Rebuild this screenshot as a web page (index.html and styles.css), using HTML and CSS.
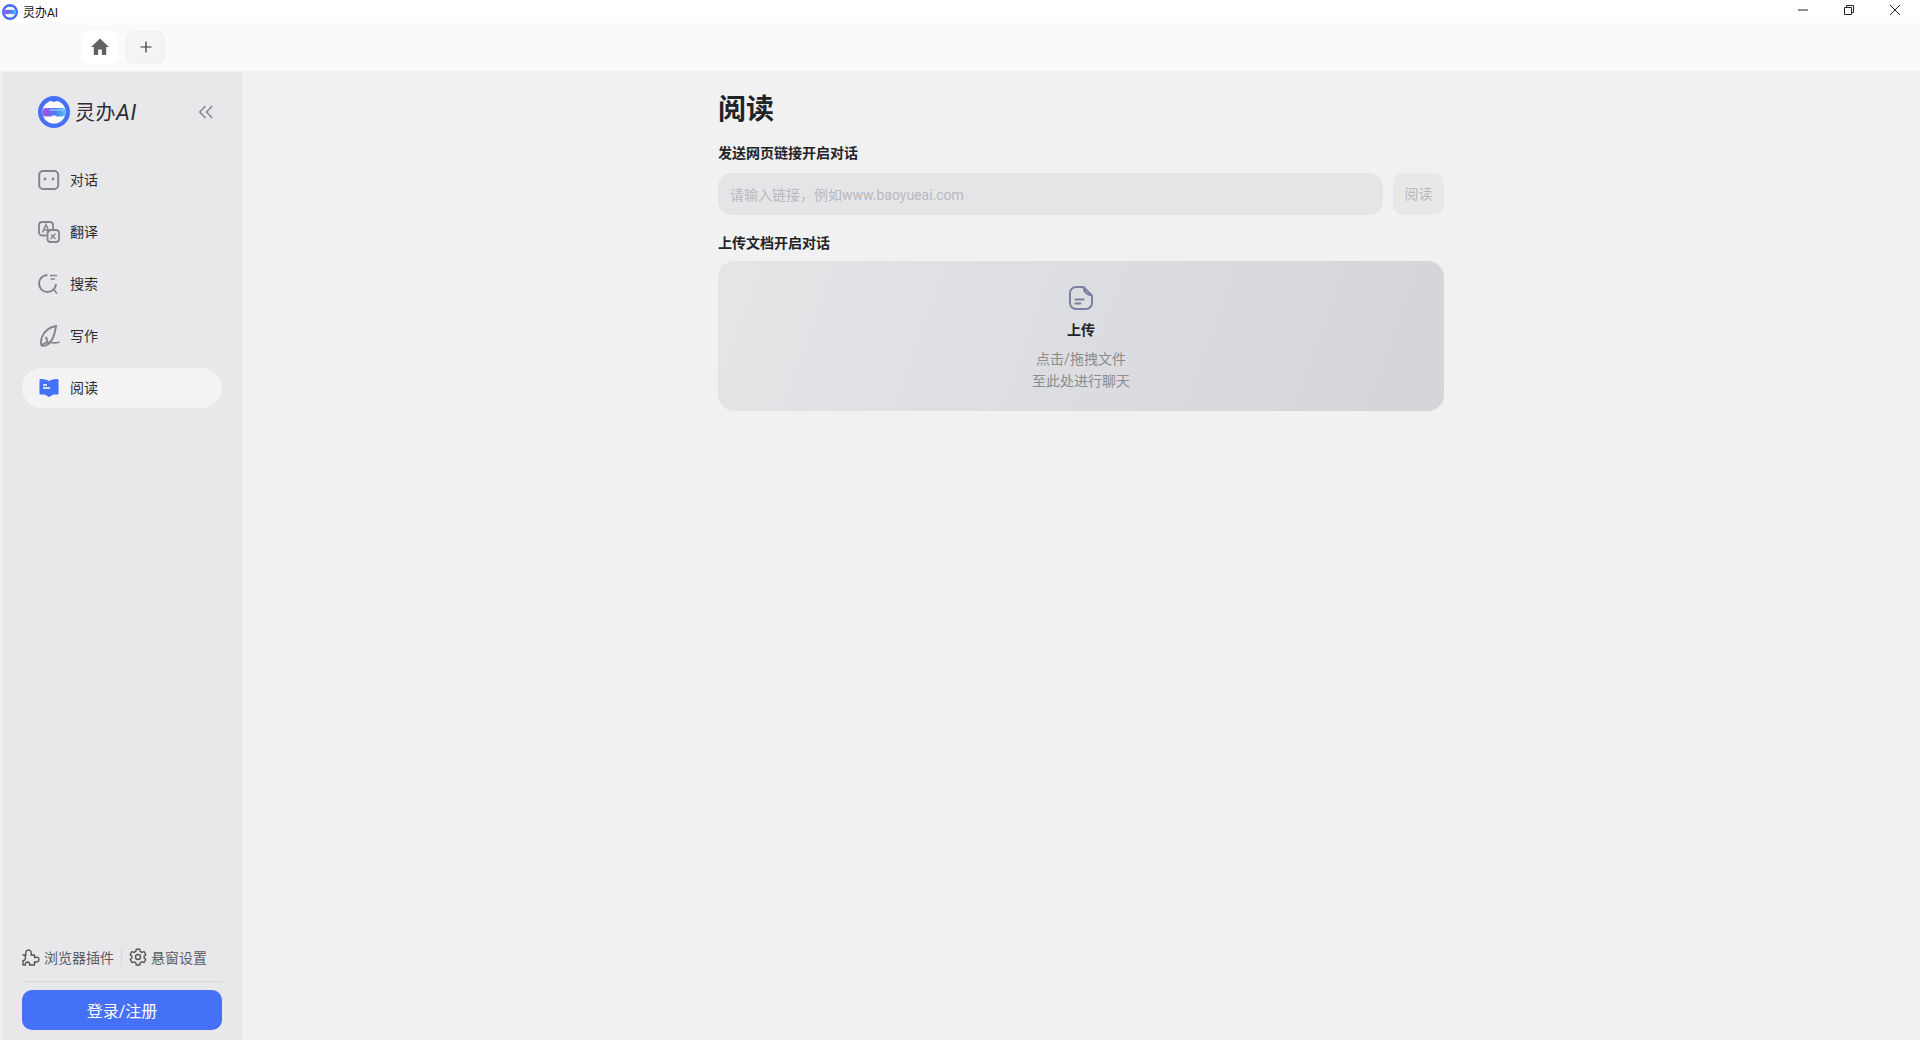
FILE: index.html
```html
<!DOCTYPE html>
<html lang="zh-CN">
<head>
  <title>灵办AI</title>
  <meta charset="utf-8">
  <meta name="viewport" content="width=device-width, initial-scale=1">
  <link rel="stylesheet" href="styles.css">
</head>
<body>
  <div class="titlebar">
    <div class="titlebar-name">
      <svg class="logo-small" viewBox="0 0 32 32">
        <circle cx="16" cy="16" r="13.500" fill="#fff" stroke="#4570f8" stroke-width="5"/>
        <path d="M11 3q5 5 10 0z" fill="#4570f8"/>
        <path d="M8 11.500h16a3.500 3.500 0 0 1 3.500 3.500v2a3.500 3.500 0 0 1-3.500 3.500h-5l-3-1.500-3 1.500H8A3.500 3.500 0 0 1 4.500 17v-2A3.500 3.500 0 0 1 8 11.500z" fill="url(#visor-a)"/>
        <defs>
          <linearGradient id="visor-a" x1="0" x2="1" y1="0" y2="0">
            <stop offset="0" stop-color="#a64fe8"/>
            <stop offset=".55" stop-color="#4b7cf5"/>
            <stop offset="1" stop-color="#4fc3f2"/>
          </linearGradient>
        </defs>
      </svg>
      <span>灵办AI</span>
    </div>
    <div class="window-buttons">
      <svg class="window-icon" viewBox="0 0 12 12"><path d="M1 6h10" stroke="#222" fill="none"/></svg>
      <svg class="window-icon" viewBox="0 0 12 12"><path d="M1.500 3.500h7v7h-7zM3.500 3.500v-2h7v7h-2" stroke="#222" fill="none"/></svg>
      <svg class="window-icon" viewBox="0 0 12 12"><path d="M1 1l10 10M11 1L1 11" stroke="#222" fill="none"/></svg>
    </div>
  </div>

  <div class="tabbar">
    <div class="tab tab-home">
      <svg class="tab-icon" viewBox="0 0 20 20"><path d="M10 1.500L1 10h2.800v8h4.400v-5.500h3.600V18h4.400v-8H19z" fill="#636363"/></svg>
    </div>
    <div class="tab tab-add">
      <svg class="tab-icon-add" viewBox="0 0 12 12"><path d="M6 .5v11M.5 6h11" stroke="#333" stroke-width="1.200" fill="none"/></svg>
    </div>
  </div>

  <div class="layout">
    <aside class="sidebar">
      <div class="brand">
        <svg class="logo" viewBox="0 0 32 32">
          <circle cx="16" cy="16" r="13.800" fill="#fff" stroke="#4570f8" stroke-width="4.400"/>
          <path d="M10.500 3q5.500 6 11 0z" fill="#4570f8"/>
          <path d="M8 12h16a3.500 3.500 0 0 1 3.500 3.500v1.500a3.500 3.500 0 0 1-3.500 3.500h-5l-3-1.500-3 1.500H8A3.500 3.500 0 0 1 4.500 17v-1.500A3.500 3.500 0 0 1 8 12z" fill="url(#visor-b)"/>
          <path d="M12 14h14" stroke="#bfeaf8" stroke-width="1.500" opacity=".6"/>
          <defs>
            <linearGradient id="visor-b" x1="0" x2="1" y1="0" y2="0">
              <stop offset="0" stop-color="#a64fe8"/>
              <stop offset=".55" stop-color="#4b7cf5"/>
              <stop offset="1" stop-color="#4fc3f2"/>
            </linearGradient>
          </defs>
        </svg>
        <span class="brand-name">灵办<em class="brand-ai">AI</em></span>
        <svg class="collapse" viewBox="0 0 14 14"><path d="M6.500 1L.8 7l5.700 6M13.200 1L7.500 7l5.700 6" stroke="#80838f" stroke-width="1.400" fill="none"/></svg>
      </div>

      <nav class="nav">
        <a class="nav-item">
          <svg class="nav-icon" viewBox="0 0 22 22"><rect x="1.200" y="2" width="19" height="18" rx="4" fill="none" stroke="#85858f" stroke-width="2"/><circle cx="7" cy="10" r="1.400" fill="#85858f"/><circle cx="15" cy="10" r="1.400" fill="#85858f"/></svg>
          <span>对话</span>
        </a>
        <a class="nav-item">
          <svg class="nav-icon" viewBox="0 0 22 22"><path d="M8.500 14.500H4a3 3 0 0 1-3-3V4a3 3 0 0 1 3-3h8a3 3 0 0 1 3 3v4" fill="none" stroke="#85858f" stroke-width="1.800"/><path d="M4.500 11.500l3.500-8 3.500 8M5.700 9h4.600" fill="none" stroke="#85858f" stroke-width="1.500"/><rect x="9.500" y="9" width="11.500" height="12" rx="3" fill="none" stroke="#85858f" stroke-width="1.800"/><path d="M12.500 18l5-5.500M13 13.500l4.500 4.500" fill="none" stroke="#85858f" stroke-width="1.400"/></svg>
          <span>翻译</span>
        </a>
        <a class="nav-item">
          <svg class="nav-icon" viewBox="0 0 22 22"><path d="M9.500 2A8.500 8.500 0 1 0 18 11" fill="none" stroke="#85858f" stroke-width="2"/><path d="M12 2.500h7M12.500 6h4.500M16 17l3 3.500" fill="none" stroke="#85858f" stroke-width="1.700"/></svg>
          <span>搜索</span>
        </a>
        <a class="nav-item">
          <svg class="nav-icon" viewBox="0 0 22 22"><path d="M18 1C12 2 6 6 4 12c-1 3-1.500 6-.5 8.500 2.500.5 5 0 7-1.500 3-2.500 6-7 7.500-18z" fill="none" stroke="#85858f" stroke-width="1.900"/><path d="M7.500 12c1.500 1.500 2 4 1 6.500M3.500 20.500c1-1 5-4 9-3 3 .8 6 .5 9-.5" fill="none" stroke="#85858f" stroke-width="1.800"/></svg>
          <span>写作</span>
        </a>
        <a class="nav-item nav-item-active">
          <svg class="nav-icon" viewBox="0 0 22 22"><path d="M2.500 2c3 0 6 .5 8.500 2 2.500-1.500 5.500-2 8.500-2a1 1 0 0 1 1 1v13.500a1 1 0 0 1-1 1h-4L11 20l-4.500-2.500h-4a1 1 0 0 1-1-1V3a1 1 0 0 1 1-1z" fill="#4570f8"/><path d="M5 8h4M5 11h7" stroke="#fff" stroke-width="1.300"/></svg>
          <span>阅读</span>
        </a>
      </nav>

      <div class="sidebar-footer">
        <div class="footer-links">
          <a class="footer-link">
            <svg class="footer-icon" viewBox="0 0 18 18"><path d="M1 7h3c-1-3 .5-5 2.500-5S10 4 9 7h3.500v2.500c2.500-.8 4.500 0 4.500 2s-2 3-4.500 2.300V17H7.500c.5-2-.5-3-2-3s-2.500 1-2 3H1v-4.500c1.500.2 2.500-.5 2.500-2.700S2.500 6.800 1 7z" fill="none" stroke="#555" stroke-width="1.400" stroke-linejoin="round"/></svg>
            <span>浏览器插件</span>
          </a>
          <span class="footer-sep"></span>
          <a class="footer-link">
            <svg class="footer-icon" viewBox="0 0 18 18"><path d="M7.300 1.200h3.400l.5 2.200 1.700 1 2.200-.7 1.700 3-1.700 1.500v1.800l1.700 1.500-1.700 3-2.200-.7-1.700 1-.5 2.200H7.300l-.5-2.200-1.700-1-2.200.7-1.700-3 1.700-1.500V8.200L1.200 6.700l1.700-3 2.200.7 1.700-1z" fill="none" stroke="#555" stroke-width="1.400" stroke-linejoin="round"/><circle cx="9" cy="9" r="2.500" fill="none" stroke="#555" stroke-width="1.400"/></svg>
            <span>悬窗设置</span>
          </a>
        </div>
        <button class="login-button" type="button">登录/注册</button>
      </div>
    </aside>

    <main class="main">
      <div class="content">
        <h1 class="page-title">阅读</h1>
        <p class="field-title">发送网页链接开启对话</p>
        <div class="link-form">
          <div class="link-input">请输入链接，例如www.baoyueai.com</div>
          <button class="read-button" type="button">阅读</button>
        </div>
        <p class="field-title field-title-upload">上传文档开启对话</p>
        <div class="upload">
          <svg class="upload-icon" viewBox="0 0 24 24"><path d="M14.500 1H7a6 6 0 0 0-6 6v10a6 6 0 0 0 6 6h10a6 6 0 0 0 6-6V9.500c-4 0-8.500-3.500-8.500-8.500zM14.500 1L23 9.500" fill="none" stroke="#7b80a0" stroke-width="2" stroke-linejoin="round"/><path d="M6.500 13.500h8M6.500 17.500h5" stroke="#7b80a0" stroke-width="2" stroke-linecap="round"/></svg>
          <p class="upload-title">上传</p>
          <p class="upload-hint">点击/拖拽文件<br>至此处进行聊天</p>
        </div>
      </div>
    </main>
  </div>
</body>
</html>
```

FILE: styles.css
```css
*, *::before, *::after {
  margin: 0;
  padding: 0;
  box-sizing: border-box;
}

html, body {
  height: 100%;
}

body {
  display: flex;
  flex-direction: column;
  overflow: hidden;
  background-color: #F1F1F2;
  color: #222327;
  font-family: Roboto, "Noto Sans CJK SC", sans-serif;
  font-size: 14px;
}

.titlebar {
  display: flex;
  justify-content: space-between;
  align-items: center;
  flex-shrink: 0;
  height: 23px;
  background-color: #FFFFFF;
}

.titlebar-name {
  display: flex;
  align-items: center;
  gap: 5px;
  padding-left: 2px;
  font-size: 12px;
  color: #111111;
}

.logo-small {
  width: 16px;
  height: 16px;
}

.window-buttons {
  display: flex;
  gap: 34px;
  padding-right: 19px;
}

.window-icon {
  width: 12px;
  height: 12px;
  margin-bottom: 3px;
}

.tabbar {
  display: flex;
  gap: 7px;
  flex-shrink: 0;
  height: 49px;
  padding: 8px 0 0 81px;
  background-color: #FAFAFA;
  border-bottom: 1px solid #F0F0F0;
}

.tab {
  display: flex;
  justify-content: center;
  align-items: center;
  width: 38px;
  height: 33px;
  padding-bottom: 2px;
  border-radius: 8px;
}

.tab-home {
  background-color: #FFFFFF;
}

.tab-add {
  width: 39px;
  background-color: #F4F4F4;
  border: 1px solid #F0F0F0;
}

.tab-icon {
  width: 20px;
  height: 20px;
}

.tab-icon-add {
  width: 12px;
  height: 12px;
}

.layout {
  display: flex;
  flex: 1;
  min-height: 0;
}

.sidebar {
  display: flex;
  flex-direction: column;
  flex-shrink: 0;
  width: 240px;
  margin-left: 2px;
  padding: 0 20px 10px;
  background-color: #E8E8EB;
}

.brand {
  display: flex;
  align-items: center;
  height: 66px;
  margin-top: 7px;
  padding-left: 16px;
}

.logo {
  width: 32px;
  height: 32px;
}

.brand-name {
  margin-left: 5px;
  padding-bottom: 2px;
  color: #2C2D33;
  font-size: 20px;
  letter-spacing: 0.5px;
}

.brand-ai {
  font-size: 22px;
  font-style: italic;
}

.collapse {
  width: 14px;
  height: 14px;
  margin-left: auto;
  margin-right: 9px;
}

.nav {
  display: flex;
  flex-direction: column;
  gap: 12px;
  margin-top: 15px;
}

.nav-item {
  display: flex;
  align-items: center;
  gap: 10px;
  height: 40px;
  padding-left: 16px;
  border-radius: 20px;
  color: #2C2D33;
  font-size: 14px;
}

.nav-item span {
  padding-bottom: 2px;
}

.nav-item-active {
  background-color: #F3F3F4;
}

.nav-icon {
  width: 22px;
  height: 22px;
}

.sidebar-footer {
  margin-top: auto;
}

.footer-links {
  display: flex;
  align-items: center;
  height: 40px;
  padding-bottom: 10px;
  border-bottom: 1px solid #D8D8DA;
  margin-bottom: 8px;
}

.footer-link {
  display: flex;
  align-items: center;
  gap: 4px;
  color: #5A5B61;
  font-size: 14px;
}

.footer-icon {
  width: 18px;
  height: 18px;
}

.footer-sep {
  width: 1px;
  height: 18px;
  margin: 0 7px;
  background-color: #D8D8DA;
}

.login-button {
  display: block;
  width: 200px;
  height: 40px;
  border: none;
  border-radius: 10px;
  background-color: #4570F8;
  color: #FFFFFF;
  font-family: inherit;
  font-size: 16px;
}

.main {
  display: flex;
  justify-content: center;
  flex: 1;
}

.content {
  width: 726px;
}

.page-title {
  margin-top: 18px;
  font-size: 28px;
  font-weight: 700;
  line-height: 40px;
}

.field-title {
  margin-top: 13px;
  font-size: 14px;
  font-weight: 700;
  line-height: 20px;
}

.field-title-upload {
  margin-top: 18px;
}

.link-form {
  display: flex;
  gap: 10px;
  margin-top: 10px;
}

.link-input {
  flex: 1;
  height: 42px;
  padding-left: 12px;
  border-radius: 14px;
  background-color: #E4E5E7;
  color: #B9B9BE;
  font-size: 14px;
  line-height: 44px;
}

.read-button {
  width: 51px;
  height: 42px;
  padding-bottom: 2px;
  border: none;
  border-radius: 10px;
  background-color: #E8E8E9;
  color: #B9B9BB;
  font-family: inherit;
  font-size: 14px;
}

.upload {
  display: flex;
  flex-direction: column;
  align-items: center;
  height: 150px;
  margin-top: 8px;
  padding-top: 25px;
  border-radius: 16px;
  background: linear-gradient(110deg, #E4E5E7, #D4D5D9);
}

.upload-icon {
  width: 24px;
  height: 24px;
}

.upload-title {
  margin-top: 10px;
  font-size: 14px;
  font-weight: 700;
  line-height: 20px;
}

.upload-hint {
  margin-top: 8px;
  color: #8A8B90;
  font-size: 14px;
  line-height: 22px;
  text-align: center;
}
```
